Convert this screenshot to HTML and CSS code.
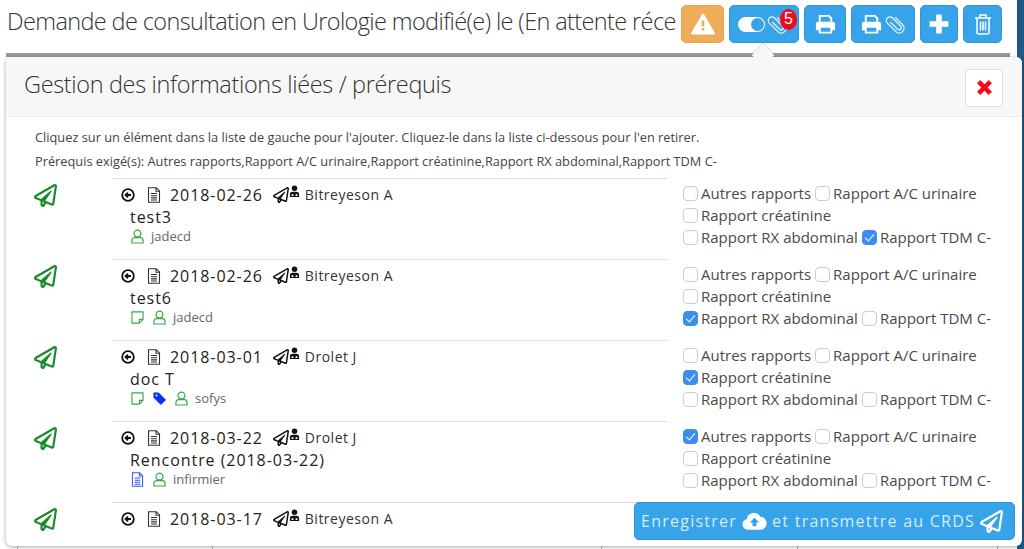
FILE: index.html
```html
<!DOCTYPE html>
<html lang="fr">
<head>
<meta charset="utf-8">
<title>Gestion des informations liées</title>
<link rel="stylesheet" href="styles.css">
</head>
<body>
<svg class="defs" width="0" height="0" aria-hidden="true">
  <defs>
    <symbol id="plane" viewBox="0 0 512 512"><path d="M440 6.500L24 246.400c-34.400 19.900-31.100 70.800 5.700 85.900L144 379.600V464c0 46.400 59.200 65.500 86.600 28.600l43.800-59.100 111.900 46.200c5.900 2.400 12.100 3.600 18.300 3.600 8.200 0 16.300-2.100 23.600-6.200 12.800-7.200 21.600-20 23.900-34.500l59.400-387.200c6.100-40.100-36.900-68.800-71.500-48.900zM192 464v-64.600l36.600 15.100L192 464zm212.600-28.700l-153.800-63.500L391 169.500c10.700-15.500-9.500-33.500-23.700-21.200L155.800 332.600 48 288 464 48l-59.400 387.300z" fill="currentColor"/></symbol>
    <symbol id="clip" viewBox="0 0 24 24"><path d="M10 7v10a2.300 2.300 0 0 0 4.600 0V5a3.800 3.800 0 0 0-7.600 0v12.500a5 5 0 0 0 10 0V7" transform="rotate(-45 12 12)" fill="none" stroke="currentColor" stroke-width="1.400" stroke-linecap="round"/></symbol>
    <symbol id="printer" viewBox="0 0 24 24"><path d="M6 9V3h9.500L18 5.500V9" fill="none" stroke="currentColor" stroke-width="2"/><path d="M4.500 9h15A2.500 2.500 0 0 1 22 11.500V18h-3v3.500H5V18H2v-6.500A2.500 2.500 0 0 1 4.500 9zM7 15.500V19.500h10V15.500z" fill="currentColor" fill-rule="evenodd"/></symbol>
    <symbol id="doc" viewBox="0 0 14 16"><path d="M1.500.7h7.800l3.200 3.200v11.400H1.500zM9 .7v3.500h3.500M4 6.500h6M4 8.700h6M4 10.900h6M4 13h6" fill="none" stroke="currentColor" stroke-width="1.100"/></symbol>
    <symbol id="user" viewBox="0 0 14 16"><circle cx="7" cy="4.800" r="3.700" fill="none" stroke="currentColor" stroke-width="1.300"/><path d="M4 9.200h6a3 3 0 0 1 3 3v2.800H1v-2.800a3 3 0 0 1 3-3z" fill="none" stroke="currentColor" stroke-width="1.300"/></symbol>
    <symbol id="note" viewBox="0 0 14 14"><path d="M1 1h12v8l-4 4H1zM13 9H9v4" fill="none" stroke="currentColor" stroke-width="1.200" stroke-linejoin="round"/></symbol>
    <symbol id="tag" viewBox="0 0 14 14"><path d="M1 1h5l7.500 7.500-5 5L1 6z" fill="currentColor" stroke="currentColor" stroke-linejoin="round"/><circle cx="3.800" cy="3.800" r="1" fill="#fff"/></symbol>
    <symbol id="back" viewBox="0 0 14 14"><circle cx="7" cy="7" r="5.800" fill="none" stroke="currentColor" stroke-width="1.800"/><path d="M10 7H5M7 4.600 4.500 7 7 9.400" fill="none" stroke="currentColor" stroke-width="1.800"/></symbol>
    <symbol id="doctor" viewBox="0 0 12 14"><circle cx="6" cy="3.500" r="3" fill="currentColor"/><path d="M1 13V9.500C1 8 2.500 7.300 6 7.300s5 .7 5 2.200V13z" fill="currentColor"/><path d="M2.800 10h2v2h-2zM7.200 10h2v2h-2z" fill="#fff"/></symbol>
  </defs>
</svg>

<div class="edge"></div>
<header class="topbar">
  <h1 class="page-title">Demande de consultation en Urologie modifié(e) le (En attente réce</h1>
  <div class="toolbar">
    <button class="tool warn" type="button">
      <svg class="ico-warn" viewBox="0 0 24 22"><path d="M12 1.500 23 20.500H1z" fill="#fff" stroke="#fff" stroke-width="2" stroke-linejoin="round"/><path d="M10.700 7.500h2.600v6h-2.600zM10.700 15h2.600v2.600h-2.600z" fill="#efad5a"/></svg>
    </button>
    <button class="tool toggle-tool" type="button">
      <span class="toggle"><span class="knob"></span></span>
      <svg class="ico-clip"><use href="#clip"/></svg>
      <span class="badge">5</span>
    </button>
    <button class="tool print" type="button"><svg class="ico-print"><use href="#printer"/></svg></button>
    <button class="tool wide" type="button"><svg class="ico-print"><use href="#printer"/></svg><svg class="ico-clip"><use href="#clip"/></svg></button>
    <button class="tool plus" type="button"><svg class="ico-plus" viewBox="0 0 18 18"><path d="M7 1h4v6h6v4h-6v6H7v-6H1V7h6z" fill="#fff" stroke="#fff" stroke-linejoin="round"/></svg></button>
    <button class="tool trash" type="button"><svg class="ico-trash" viewBox="0 0 18 22" fill="none" stroke="#fff" stroke-width="1.500"><path d="M1 5h16M6 5V2h6v3M3 5v14.500a1.500 1.500 0 0 0 1.500 1.500h9a1.500 1.500 0 0 0 1.500-1.500V5M6.500 8.500v9M9 8.500v9M11.500 8.500v9"/></svg></button>
  </div>
</header>
<div class="behind"><span class="cell c1"></span><span class="cell c2"></span><span class="cell c3"></span><span class="cell c4"></span><span class="cell c5"></span></div>

<section class="popover">
  <span class="arrow"></span>
  <div class="pop-head">
    <h2 class="pop-title">Gestion des informations liées / prérequis</h2>
    <button class="close" type="button"><svg viewBox="0 0 16 16"><path d="M4 1 8 5l4-4 3 3-4 4 4 4-3 3-4-4-4 4-3-3 4-4-4-4z" fill="#f00b1f"/></svg></button>
  </div>
  <div class="pop-body">
    <p class="hint">Cliquez sur un élément dans la liste de gauche pour l'ajouter. Cliquez-le dans la liste ci-dessous pour l'en retirer.</p>
    <p class="hint">Prérequis exigé(s): Autres rapports,Rapport A/C urinaire,Rapport créatinine,Rapport RX abdominal,Rapport TDM C-</p>

    <div class="row">
      <svg class="send"><use href="#plane"/></svg>
      <div class="item">
        <div class="meta"><svg class="i-back"><use href="#back"/></svg><svg class="i-doc"><use href="#doc"/></svg><span class="date">2018-02-26</span><span class="sender"><svg class="i-plane"><use href="#plane"/></svg><svg class="i-doctor"><use href="#doctor"/></svg></span><span class="who">Bitreyeson A</span></div>
        <div class="name">test3</div>
        <div class="sub"><svg class="i-user"><use href="#user"/></svg><span>jadecd</span></div>
      </div>
      <div class="checks">
        <label class="chk"><input type="checkbox">Autres rapports</label>
        <label class="chk"><input type="checkbox">Rapport A/C urinaire</label>
        <label class="chk line"><input type="checkbox">Rapport créatinine</label>
        <label class="chk"><input type="checkbox">Rapport RX abdominal</label>
        <label class="chk"><input type="checkbox" checked>Rapport TDM C-</label>
      </div>
    </div>

    <div class="row">
      <svg class="send"><use href="#plane"/></svg>
      <div class="item">
        <div class="meta"><svg class="i-back"><use href="#back"/></svg><svg class="i-doc"><use href="#doc"/></svg><span class="date">2018-02-26</span><span class="sender"><svg class="i-plane"><use href="#plane"/></svg><svg class="i-doctor"><use href="#doctor"/></svg></span><span class="who">Bitreyeson A</span></div>
        <div class="name">test6</div>
        <div class="sub"><svg class="i-note"><use href="#note"/></svg><svg class="i-user"><use href="#user"/></svg><span>jadecd</span></div>
      </div>
      <div class="checks">
        <label class="chk"><input type="checkbox">Autres rapports</label>
        <label class="chk"><input type="checkbox">Rapport A/C urinaire</label>
        <label class="chk line"><input type="checkbox">Rapport créatinine</label>
        <label class="chk"><input type="checkbox" checked>Rapport RX abdominal</label>
        <label class="chk"><input type="checkbox">Rapport TDM C-</label>
      </div>
    </div>

    <div class="row">
      <svg class="send"><use href="#plane"/></svg>
      <div class="item">
        <div class="meta"><svg class="i-back"><use href="#back"/></svg><svg class="i-doc"><use href="#doc"/></svg><span class="date">2018-03-01</span><span class="sender"><svg class="i-plane"><use href="#plane"/></svg><svg class="i-doctor"><use href="#doctor"/></svg></span><span class="who">Drolet J</span></div>
        <div class="name">doc T</div>
        <div class="sub"><svg class="i-note"><use href="#note"/></svg><svg class="i-tag"><use href="#tag"/></svg><svg class="i-user"><use href="#user"/></svg><span>sofys</span></div>
      </div>
      <div class="checks">
        <label class="chk"><input type="checkbox">Autres rapports</label>
        <label class="chk"><input type="checkbox">Rapport A/C urinaire</label>
        <label class="chk line"><input type="checkbox" checked>Rapport créatinine</label>
        <label class="chk"><input type="checkbox">Rapport RX abdominal</label>
        <label class="chk"><input type="checkbox">Rapport TDM C-</label>
      </div>
    </div>

    <div class="row">
      <svg class="send"><use href="#plane"/></svg>
      <div class="item">
        <div class="meta"><svg class="i-back"><use href="#back"/></svg><svg class="i-doc"><use href="#doc"/></svg><span class="date">2018-03-22</span><span class="sender"><svg class="i-plane"><use href="#plane"/></svg><svg class="i-doctor"><use href="#doctor"/></svg></span><span class="who">Drolet J</span></div>
        <div class="name">Rencontre (2018-03-22)</div>
        <div class="sub"><svg class="i-filled"><use href="#doc"/></svg><svg class="i-user"><use href="#user"/></svg><span>infirmier</span></div>
      </div>
      <div class="checks">
        <label class="chk"><input type="checkbox" checked>Autres rapports</label>
        <label class="chk"><input type="checkbox">Rapport A/C urinaire</label>
        <label class="chk line"><input type="checkbox">Rapport créatinine</label>
        <label class="chk"><input type="checkbox">Rapport RX abdominal</label>
        <label class="chk"><input type="checkbox">Rapport TDM C-</label>
      </div>
    </div>

    <div class="row last">
      <svg class="send"><use href="#plane"/></svg>
      <div class="item">
        <div class="meta"><svg class="i-back"><use href="#back"/></svg><svg class="i-doc"><use href="#doc"/></svg><span class="date">2018-03-17</span><span class="sender"><svg class="i-plane"><use href="#plane"/></svg><svg class="i-doctor"><use href="#doctor"/></svg></span><span class="who">Bitreyeson A</span></div>
      </div>
    </div>
  </div>
  <button class="save" type="button"><span>Enregistrer</span>
    <svg class="i-cloud" viewBox="0 0 26 20"><path d="M6 19a5.500 5.500 0 0 1-1-10.900A7.500 7.500 0 0 1 19 5.500a6.800 6.800 0 0 1 1 13.500z" fill="#fff"/><path d="M13 6.500l5 5h-3v4h-4v-4H8z" fill="#37a3e8"/></svg>
    <span>et transmettre au CRDS</span>
    <svg class="i-send"><use href="#plane"/></svg>
  </button>
</section>
</body>
</html>
```
FILE: styles.css
```css
* { box-sizing: border-box; }
html, body { margin: 0; height: 549px; overflow: hidden; background: #fff; }
body { font-family: "Open Sans", "Liberation Sans", sans-serif; color: #333; position: relative; }
.defs { position: absolute; }
.edge { position: absolute; top: 0; right: 0; bottom: 0; width: 7px; background: #1d5a84; }

.topbar { display: flex; align-items: flex-start; height: 53px; padding: 5px 0 0 7px; }
.page-title { flex: none; width: 669px; margin: -2px 0 0; font-size: 23.500px; line-height: 36px; font-weight: 300; white-space: nowrap; color: #333; letter-spacing: -.62px; }
.toolbar { display: flex; gap: 5px; margin-left: 5px; }
.tool { position: relative; display: flex; align-items: center; justify-content: center; gap: 1px; width: 42px; height: 38px; padding: 0; background: #37a3e8; border: 1px solid #2f95d8; border-radius: 5px; color: #fff; }
.warn { width: 43px; background: #efad5a; border-color: #e8a14c; }
.toggle-tool { width: 70px; justify-content: flex-start; padding-left: 8px; }
.print { width: 42px; }
.wide { width: 64px; }
.plus { width: 38px; }
.trash { width: 39px; }
.ico-warn { width: 24px; height: 22px; }
.ico-print { width: 23px; height: 23px; }
.ico-clip { width: 23px; height: 23px; color: #e3f2fc; flex: none; }
.ico-plus { width: 20px; height: 20px; }
.ico-trash { width: 18px; height: 22px; }
.toggle { display: block; flex: none; width: 27px; height: 15px; border-radius: 8px; background: #fff; position: relative; }
.knob { position: absolute; right: 1px; top: 1px; width: 13px; height: 13px; border-radius: 50%; background: #37a3e8; }
.badge { position: absolute; left: 50px; top: 3px; width: 17px; height: 21px; border-radius: 50%; background: #f2091d; color: #fff; font-size: 16px; line-height: 20px; text-align: center; font-weight: 300; }

.behind { position: absolute; left: 6px; top: 53px; width: 1004px; height: 496px; display: flex; border-top: 4px solid #999; }
.cell { display: block; border-right: 1px solid #bbb; }
.c1 { width: 12px; }
.c2 { width: 195px; }
.c3 { width: 389px; }
.c4 { width: 196px; }
.c5 { width: 200px; }

.popover { position: absolute; left: 6px; top: 57px; width: 1016px; height: 489px; background: #fff; border-radius: 6px; box-shadow: 0 1px 4px rgba(0,0,0,.35); }
.arrow { position: absolute; left: 749px; top: -10px; width: 16px; height: 16px; background: #f7f7f7; transform: rotate(45deg); box-shadow: -1px -1px 1px rgba(0,0,0,.12); }
.pop-head { position: relative; display: flex; align-items: center; justify-content: space-between; height: 60px; padding: 0 19px 0 18px; background: #f7f7f7; border-bottom: 1px solid #ebebeb; border-radius: 6px 6px 0 0; }
.pop-title { margin: -5px 0 0; font-size: 23.500px; font-weight: 300; line-height: 32px; color: #333; letter-spacing: -.35px; }
.close { display: flex; align-items: center; justify-content: center; width: 38px; height: 38px; margin-top: 2px; padding: 0; background: #fff; border: 1px solid #ddd; border-radius: 4px; }
.close svg { width: 17px; height: 17px; }

.pop-body { padding: 8px 6px 0 29px; }
.hint { margin: 0; font-size: 12.800px; line-height: 24px; color: #444; }
.row { display: grid; grid-template-columns: 77px 555px 1fr; height: 81px; }
.hint + .row { margin-top: 5px; }
.send { width: 23px; height: 23px; margin: 6px 0 0 -1px; color: #1a8a2a; justify-self: start; }
.item { border-top: 1px solid #ddd; padding: 6px 0 0 9px; }
.last { height: 44px; }
.last .item { min-height: 44px; }
.meta { display: flex; align-items: center; height: 19px; }
.i-back { width: 14px; height: 14px; color: #111; margin-right: 12px; flex: none; }
.i-doc { width: 14px; height: 16px; color: #333; margin-right: 9px; flex: none; }
.date { font-size: 16px; letter-spacing: .93px; color: #222; }
.sender { display: flex; align-items: flex-start; margin-left: 10px; height: 18px; margin-top: -2px; color: #111; }
.i-plane { width: 16px; height: 16px; margin-top: 2px; }
.i-doctor { width: 11px; height: 13px; }
.who { margin-left: 5px; font-size: 14px; letter-spacing: .5px; color: #333; }
.name { margin: 3px 0 0 9px; font-size: 16px; line-height: 20px; letter-spacing: .95px; color: #222; }
.sub { display: flex; align-items: center; gap: 9px; height: 18px; margin: 0 0 0 10px; font-size: 13px; color: #666; }
.sub svg { flex: none; }
.i-user { width: 13px; height: 15px; color: #3aa648; margin-right: -2px; }
.i-note { width: 13px; height: 13px; color: #3aa648; }
.i-tag { width: 13px; height: 13px; color: #0b2ff0; }
.i-filled { width: 13px; height: 15px; color: #2f55f0; }

.checks { display: flex; flex-wrap: wrap; align-content: flex-start; padding: 4px 0 0 16px; font-size: 15px; line-height: 22px; color: #4a4a4a; }
.chk { display: inline-flex; align-items: center; height: 22px; margin-right: 4px; white-space: nowrap; }
.line { width: 100%; }
input[type=checkbox] { appearance: none; -webkit-appearance: none; flex: none; width: 15px; height: 15px; margin: 0 3px 0 0; border: 1px solid #ccc; border-radius: 4px; background: #fff; position: relative; }
input[type=checkbox]:checked { background: #3b8df0; border-color: #3b8df0; }
input[type=checkbox]:checked::after { content: ""; position: absolute; left: 4px; top: 1.500px; width: 4px; height: 8px; border: solid #fff; border-width: 0 1.500px 1.500px 0; transform: rotate(40deg); }

.save { position: absolute; left: 628px; top: 445px; display: flex; align-items: center; gap: 5px; width: 381px; height: 38px; padding: 0 6px; background: #37a3e8; border: 1px solid #2f95d8; border-radius: 5px; color: #d4ecfb; font: 16px "Open Sans", sans-serif; letter-spacing: 1.250px; white-space: nowrap; }
.i-cloud { width: 25px; height: 20px; flex: none; }
.i-send { width: 23px; height: 23px; flex: none; color: #fff; }
```
